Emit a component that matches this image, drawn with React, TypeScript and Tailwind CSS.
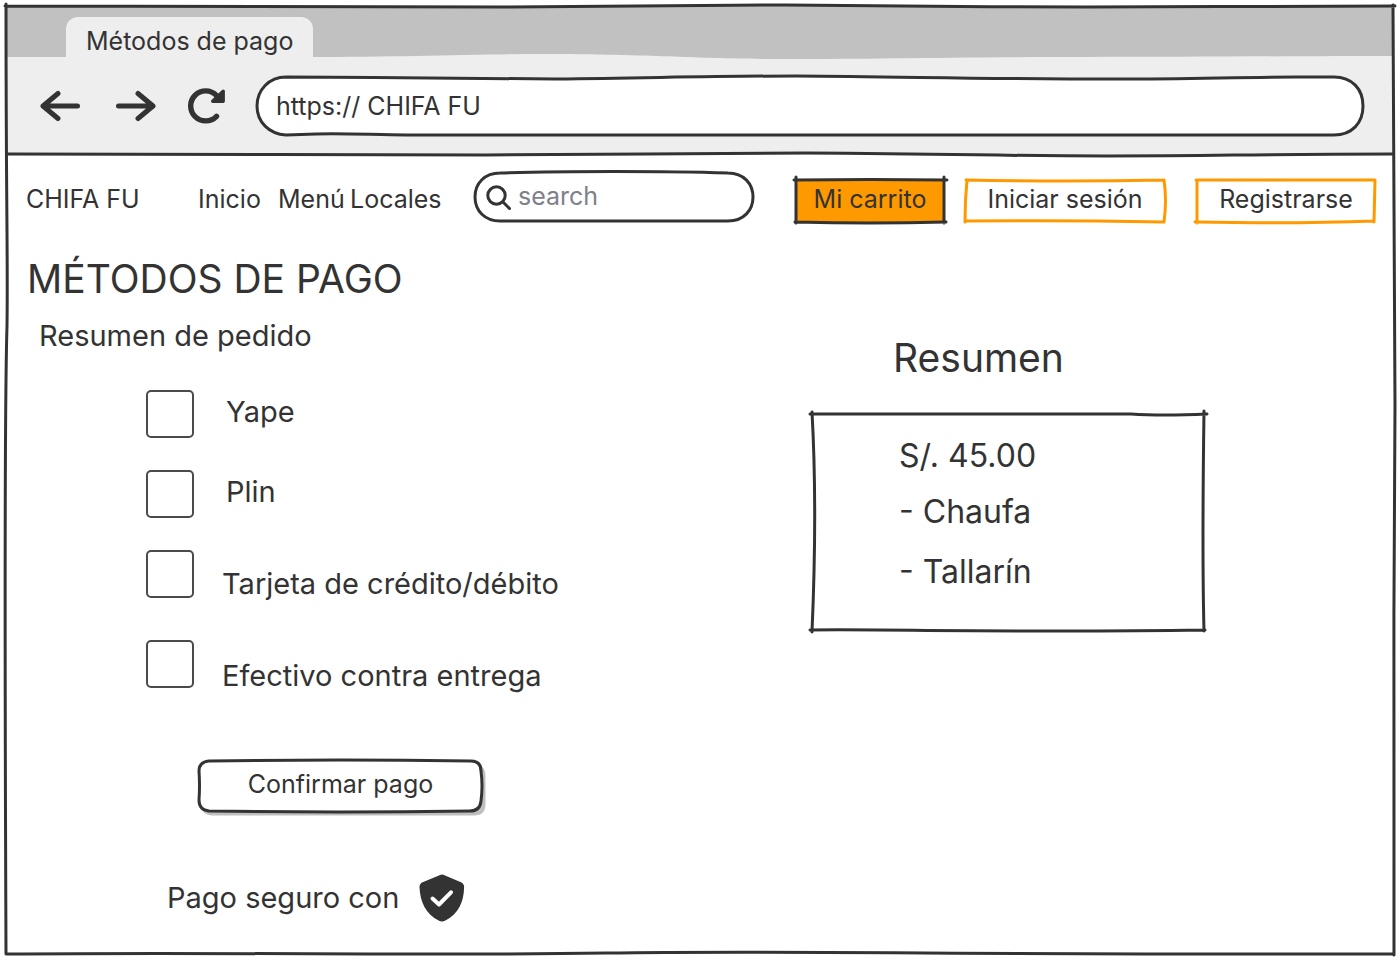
import type { ReactNode } from 'react';

type OutlineProps = { w: number; h: number; d: string; stroke?: string; fill?: string; width?: number };

/* Hand-drawn outline stretched behind the box that holds it. */
function Outline({ w, h, d, stroke = '#333333', fill = 'none', width = 3 }: OutlineProps) {
  return (
    <svg
      aria-hidden="true"
      className="pointer-events-none absolute inset-0 h-full w-full overflow-visible"
      viewBox={`0 0 ${w} ${h}`}
      preserveAspectRatio="none"
    >
      <path d={d} fill={fill} stroke={stroke} strokeWidth={width} strokeLinecap="round" strokeLinejoin="round" vectorEffect="non-scaling-stroke" />
    </svg>
  );
}

function BackIcon() {
  return (
    <svg aria-hidden="true" width="40" height="32" viewBox="0 0 40 32" fill="none" stroke="#333333" strokeWidth="5" strokeLinecap="round" strokeLinejoin="round">
      <path d="M37.500 16H3M18 3.500L3 16l15 12.500" />
    </svg>
  );
}

function ForwardIcon() {
  return (
    <svg aria-hidden="true" width="40" height="32" viewBox="0 0 40 32" fill="none" stroke="#333333" strokeWidth="5" strokeLinecap="round" strokeLinejoin="round">
      <path d="M2.500 16H37M22 3.500L37 16 22 28.500" />
    </svg>
  );
}

function ReloadIcon() {
  return (
    <svg aria-hidden="true" width="38" height="36" viewBox="0 0 38 36" fill="none" stroke="#333333" strokeLinecap="round" strokeLinejoin="round">
      <path d="M28.500 28.300A15 15 0 1 1 28.500 7.500L31 10" strokeWidth="5.400" />
      <path d="M35.200 3.200V13.200H24.700Z" fill="#333333" strokeWidth="3.400" />
    </svg>
  );
}

function SearchIcon() {
  return (
    <svg aria-hidden="true" className="shrink-0" width="26" height="26" viewBox="0 0 26 26" fill="none" stroke="#333333" strokeWidth="3" strokeLinecap="round">
      <circle cx="10.500" cy="10.500" r="8.700" />
      <path d="M17 17l6.500 6.500" />
    </svg>
  );
}

function ShieldIcon() {
  return (
    <svg aria-hidden="true" width="46" height="48" viewBox="0 0 46 48">
      <path d="M20.500 1.200q2.500-1.200 5 0L42 8.300q3.200 1.400 3.100 5C44.800 28 39.500 40 26 46.800q-3 1.400-6 0C6.500 40 1.200 28 .5 13.300q-.1-3.600 3.100-5Z" fill="#333333" />
      <path d="M13.500 24.500l6.500 6 12-12.200" fill="none" stroke="#ffffff" strokeWidth="4" strokeLinecap="round" strokeLinejoin="round" />
    </svg>
  );
}

function BoxButton({ children, className, outline }: { children: ReactNode; className: string; outline: ReactNode }) {
  return (
    <button type="button" className={`relative h-[42px] shrink-0 pb-1 ${className}`}>
      {outline}
      <span className="relative">{children}</span>
    </button>
  );
}

const methods = [
  { id: 'yape', label: 'Yape', row: 'gap-8', text: 'pt-1' },
  { id: 'plin', label: 'Plin', row: 'gap-8 mt-8', text: 'pt-1' },
  { id: 'tarjeta', label: 'Tarjeta de crédito/débito', row: 'gap-7 mt-8', text: 'pt-4' },
  { id: 'efectivo', label: 'Efectivo contra entrega', row: 'gap-7 mt-[38px]', text: 'pt-[18px]' },
];

export default function App() {
  return (
    <div className="flex min-h-screen bg-white p-1.5 font-['Inter',sans-serif] text-[25px] leading-9 text-[#333333]">
      <div className="relative flex grow flex-col">
        <header className="relative bg-[#eeeeee]">
          <div className="relative flex h-[51px] items-end pl-[60px]">
            <Outline
              w={1388}
              h={51}
              stroke="none"
              fill="#c1c1c1"
              d="M0 0H1388V50C1300 50 1180 51 1080 51C940 51 870 53 780 53C680 53 680 49 540 48C460 48 400 51 300 51H0Z"
            />
            <div className="relative flex h-10 min-w-[247px] items-center rounded-t-xl bg-[#eeeeee] px-5 pt-2">Métodos de pago</div>
          </div>
          <div className="flex h-[98px] items-center pl-[34px] pr-[30px]">
            <div className="flex items-center gap-[34px]">
              <button type="button" aria-label="Atrás"><BackIcon /></button>
              <button type="button" aria-label="Adelante" className="pl-0.5"><ForwardIcon /></button>
              <button type="button" aria-label="Recargar" className="-ml-0.5"><ReloadIcon /></button>
            </div>
            <div className="relative ml-[30px] h-[58px] grow">
              <Outline
                w={1108}
                h={58}
                fill="#ffffff"
                d="M30 0C120 0 200 2 300 2C400 1 450 -1 540 -1C660 0 740 2 860 2C940 2 980 0 1040 0H1078C1096 0 1107 12 1107 29S1096 58 1078 58H150C120 58 90 56 60 57L30 58C13 57 1 45 1 29S13 0 30 0Z"
              />
              <input aria-label="Dirección" defaultValue="https:// CHIFA FU" className="relative h-full w-full bg-transparent px-5 outline-none" />
            </div>
          </div>
          <Outline w={1388} h={149} d="M1 148C200 148 300 149 480 149C600 149 680 147 800 147C960 148 1000 150 1100 150C1220 150 1240 148 1387 148" />
        </header>

        <nav className="flex h-[87px] items-center px-5">
          <a href="#inicio-chifa" className="w-[172px] shrink-0">CHIFA FU</a>
          <div className="flex w-[276px] shrink-0">
            <a href="#inicio" className="w-20">Inicio</a>
            <a href="#menu" className="w-[72px]">Menú</a>
            <a href="#locales">Locales</a>
          </div>
          <label className="relative mb-0.5 flex h-[49px] w-[280px] shrink-0 items-center gap-1.5 px-3">
            <Outline
              w={280}
              h={49}
              d="M26 0C90 -2 190 -2 254 0C270 0 279 11 279 24S270 48 254 48H26C11 48 1 38 1 24S11 0 26 0Z"
            />
            <SearchIcon />
            <input aria-label="search" placeholder="search" className="relative h-9 w-full min-w-0 bg-transparent pb-1 outline-none placeholder:text-[#80808a]" />
          </label>
          <div className="-mr-0.5 ml-auto flex pl-5 pt-1">
            <BoxButton
              className="w-[150px]"
              outline={
                <>
                  <Outline w={150} h={42} stroke="none" fill="#ff9900" d="M1 1L149 0V42Q75 44 1 42Z" />
                  <Outline w={150} h={42} d="M-1 0Q75 -1 152 0M1 -3V43M0 42Q75 44 151 42M149 -3V43" />
                </>
              }
            >
              Mi carrito
            </BoxButton>
            <BoxButton
              className="ml-5 w-[200px]"
              outline={<Outline w={200} h={42} stroke="#ff9900" d="M1 0Q100 2 199 0M2 0Q0 20 0 42M0 41Q100 40 199 42M199 0Q202 20 199 42" />}
            >
              Iniciar sesión
            </BoxButton>
            <BoxButton
              className="ml-[31px] w-[180px]"
              outline={<Outline w={180} h={42} stroke="#ff9900" d="M0 0H179M1 0V43M-1 42Q100 44 178 41M179 0L178 42" />}
            >
              Registrarse
            </BoxButton>
          </div>
        </nav>

        <main className="grid grow grid-cols-[58fr_42fr] items-start pt-0.5">
          <section className="pl-[21px] pt-3">
            <h1 className="text-[39px] leading-[46px]">MÉTODOS DE PAGO</h1>
            <h2 className="mt-4 pl-3 text-[29px] leading-9">Resumen de pedido</h2>
            <form className="pl-[119px] pt-9 text-[29px]" onSubmit={(event) => event.preventDefault()}>
              {methods.map((method) => (
                <div key={method.id} className={`flex items-start ${method.row}`}>
                  <input
                    id={method.id}
                    type="checkbox"
                    className="size-12 shrink-0 appearance-none rounded-[5px] border-2 border-[#4a4a4a] bg-white checked:bg-[#333333]"
                  />
                  <label htmlFor={method.id} className={method.text}>{method.label}</label>
                </div>
              ))}
              <button type="submit" className="relative ml-[52px] mt-[66px] h-[52px] w-[285px] pb-1 text-[25px]">
                <Outline w={285} h={52} stroke="#bfbfbf" fill="#bfbfbf" d="M14 6H276Q286 6 286 16V44Q286 54 276 54H14Q6 54 4 46Z" />
                <Outline
                  w={285}
                  h={52}
                  fill="#ffffff"
                  d="M11 1Q140 -1 273 1Q283 1 283 11Q285 26 283 41Q282 51 272 51Q140 53 11 51Q1 50 1 40Q2 26 1 11Q1 2 11 1Z"
                />
                <span className="relative">Confirmar pago</span>
              </button>
            </form>
            <p className="mt-[62px] flex items-center gap-5 pl-[140px] text-[29px]">
              Pago seguro con
              <ShieldIcon />
            </p>
          </section>

          <section className="pt-[91px]">
            <h2 className="pl-[82px] text-[39px] leading-[46px]">Resumen</h2>
            <div className="relative mt-8 w-full max-w-[394px] py-5 pl-[88px] text-[32px]">
              <Outline
                w={394}
                h={218}
                d="M-1 1H320Q350 3 396 1M1 -1C5 70 4 150 1 219M-1 217C90 216 200 220 394 217M393 -2C392 70 391 140 393 218"
              />
              <p className="h-[60px] leading-[46px]">S/. 45.00</p>
              <ul>
                <li className="h-[60px] leading-[38px]">- Chaufa</li>
                <li className="h-[58px] leading-[38px]">- Tallarín</li>
              </ul>
            </div>
          </section>
        </main>

        <Outline
          w={1388}
          h={948}
          d="M-1 0C300 0 400 1 500 1C650 0 700 -1 780 -1C900 0 980 1 1080 1C1220 1 1220 0 1389 0M0 -2C0 200 2 250 1 320C-2 420 -1 700 0 948M0 948C250 946 400 950 600 947S900 949 1388 948M1387 -1C1387 150 1389 250 1389 400C1388 600 1387 700 1388 949"
        />
      </div>
    </div>
  );
}
